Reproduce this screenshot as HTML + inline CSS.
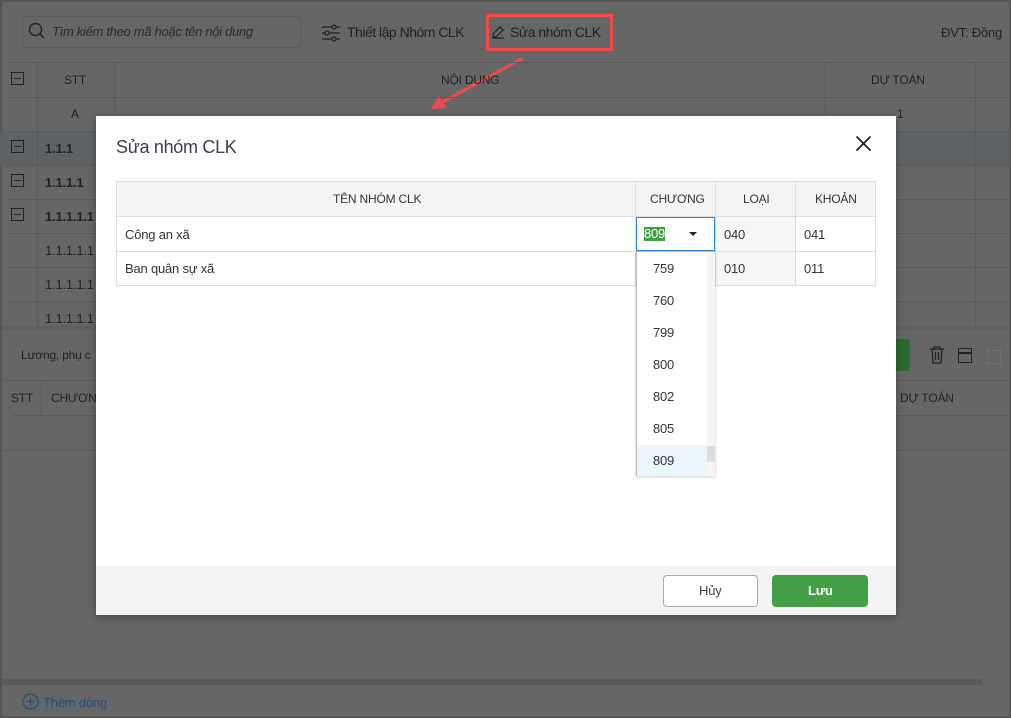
<!DOCTYPE html>
<html><head><meta charset="utf-8"><style>
*{box-sizing:border-box;margin:0;padding:0}
body{width:1011px;height:718px;overflow:hidden;background:#666;font-family:"Liberation Sans",sans-serif;font-size:13px;color:#222;position:relative;letter-spacing:-0.2px}
.a{position:absolute}
.t{position:absolute;white-space:nowrap}
.hl{position:absolute;height:1px;background:#5a5a5a}
.vl{position:absolute;width:1px;background:#5a5a5a}
.cb{position:absolute;width:13px;height:13px;border:1.5px solid #222;left:11px}
.cb:after{content:"";position:absolute;left:2px;right:2px;top:4.5px;height:1.5px;background:#222}
.m{font-size:13px;color:#333}
</style></head><body>
<div class="a" style="left:0;top:0;width:1011px;height:2px;background:#555"></div>
<div class="a" style="left:0;top:0;width:2px;height:718px;background:#555"></div>
<div class="a" style="right:0;top:0;width:2px;height:718px;background:#555"></div>
<div class="a" style="left:0;bottom:0;width:1011px;height:2px;background:#555"></div>
<!-- toolbar -->
<div class="a" style="left:22px;top:16px;width:279px;height:32px;border:1px solid #5a5a5a"></div>
<svg class="a" style="left:28px;top:22px" width="18" height="18"><circle cx="7.5" cy="7.5" r="6" fill="none" stroke="#222" stroke-width="1.4"/><line x1="12" y1="12" x2="16" y2="16" stroke="#222" stroke-width="1.5"/></svg>
<div class="t" style="left:52px;top:24px;font-style:italic;color:#2a2a2a;letter-spacing:-0.3px">Tìm kiếm theo mã hoặc tên nội dung</div>
<svg class="a" style="left:321px;top:23px" width="20" height="20"><g stroke="#222" stroke-width="1.3" fill="#666"><line x1="1" y1="4" x2="19" y2="4"/><line x1="1" y1="10" x2="19" y2="10"/><line x1="1" y1="16" x2="19" y2="16"/><circle cx="13" cy="4" r="2"/><circle cx="6" cy="10" r="2"/><circle cx="13" cy="16" r="2"/></g></svg>
<div class="t" style="left:347px;top:24px;font-size:14px;letter-spacing:-0.5px">Thiết lập Nhóm CLK</div>
<div class="a" style="left:486px;top:14px;width:127px;height:37px;border:3px solid #f04a4a"></div>
<svg class="a" style="left:491px;top:25px" width="14" height="14"><path d="M2 12 L2 9 L9 2 L12 5 L5 12 Z M1 13 H13" fill="none" stroke="#222" stroke-width="1.2"/></svg>
<div class="t" style="left:510px;top:24px;font-size:14px;letter-spacing:-0.5px">Sửa nhóm CLK</div>
<div class="t" style="left:941px;top:25px">ĐVT: Đồng</div>
<svg class="a" style="left:425px;top:52px" width="105" height="62"><line x1="98" y1="6" x2="14" y2="52" stroke="#f04a4a" stroke-width="3"/><polygon points="6,57 14,44 22,56" fill="#f04a4a"/></svg>
<!-- top table -->
<div class="hl" style="left:8px;top:62px;width:1001px"></div>
<div class="hl" style="left:8px;top:97px;width:1001px"></div>
<div class="hl" style="left:8px;top:131px;width:1001px"></div>
<div class="a" style="left:0;top:132px;width:1009px;height:33px;background:#5f6265"></div>
<div class="hl" style="left:8px;top:165px;width:1001px"></div>
<div class="hl" style="left:8px;top:199px;width:1001px"></div>
<div class="hl" style="left:8px;top:233px;width:1001px"></div>
<div class="hl" style="left:8px;top:267px;width:1001px"></div>
<div class="hl" style="left:8px;top:301px;width:1001px"></div>
<div class="vl" style="left:37px;top:62px;height:264px"></div>
<div class="vl" style="left:114px;top:62px;height:264px"></div>
<div class="vl" style="left:825px;top:62px;height:54px"></div>
<div class="vl" style="left:975px;top:62px;height:264px"></div>
<div class="cb" style="top:72px"></div>
<div class="t m" style="left:64px;top:73px;font-size:12px;color:#222">STT</div>
<div class="t m" style="left:441px;top:73px;font-size:12px;color:#222">NỘI DUNG</div>
<div class="t m" style="left:871px;top:73px;font-size:12px;color:#222">DỰ TOÁN</div>
<div class="t m" style="left:71px;top:107px;font-size:12px;color:#222">A</div>
<div class="t m" style="left:897px;top:107px;font-size:12px;color:#222">1</div>
<div class="cb" style="top:140px"></div><div class="t" style="left:45px;top:141px;font-weight:bold;color:#222">1.1.1</div>
<div class="cb" style="top:174px"></div><div class="t" style="left:45px;top:175px;font-weight:bold;color:#222">1.1.1.1</div>
<div class="cb" style="top:208px"></div><div class="t" style="left:45px;top:209px;font-weight:bold;color:#222">1.1.1.1.1</div>
<div class="t" style="left:45px;top:243px">1.1.1.1.1</div>
<div class="t" style="left:45px;top:277px">1.1.1.1.1</div>
<div class="t" style="left:45px;top:311px">1.1.1.1.1</div>
<div class="a" style="left:2px;top:326px;width:1007px;height:4px;background:#5e5e5e"></div>
<!-- lower -->
<div class="t" style="left:21px;top:348px;font-size:12px">Lương, phụ c</div>
<div class="a" style="left:860px;top:339px;width:50px;height:32px;background:#2d6a2f;border-radius:3px"></div>
<svg class="a" style="left:929px;top:346px" width="16" height="18"><g fill="none" stroke="#222" stroke-width="1.3"><path d="M1 3 H15 M5 3 V1 H11 V3 M3 3 L4 17 H12 L13 3 M6.5 6 V14 M9.5 6 V14"/></g></svg>
<div class="a" style="left:958px;top:348px;width:14px;height:15px;border:1.5px solid #222"></div>
<div class="a" style="left:958px;top:352px;width:14px;height:1.5px;background:#222"></div>
<div class="a" style="left:987px;top:350px;width:14px;height:14px;border:1px dashed #777"></div>
<div class="hl" style="left:2px;top:380px;width:1007px"></div>
<div class="hl" style="left:12px;top:415px;width:997px"></div>
<div class="hl" style="left:2px;top:450px;width:1007px"></div>
<div class="vl" style="left:41px;top:380px;height:35px"></div>
<div class="t m" style="left:11px;top:391px;font-size:12px;color:#222">STT</div>
<div class="t m" style="left:51px;top:391px;font-size:12px;color:#222">CHƯƠNG</div>
<div class="t m" style="left:900px;top:391px;font-size:12px;color:#222">DỰ TOÁN</div>
<div class="a" style="left:2px;top:679px;width:980px;height:6px;background:#5b5b5b"></div>
<svg class="a" style="left:22px;top:693px" width="17" height="17"><circle cx="8.5" cy="8.5" r="7.5" fill="none" stroke="#2b4c72" stroke-width="1.2"/><path d="M8.5 4.5 V12.5 M4.5 8.5 H12.5" stroke="#2b4c72" stroke-width="1.2"/></svg>
<div class="t" style="left:43px;top:695px;color:#2b4c72">Thêm dòng</div>
<!-- modal -->
<div class="a" style="left:96px;top:116px;width:800px;height:499px;background:#fff;box-shadow:0 2px 8px rgba(0,0,0,.3)">
<div class="t" style="left:20px;top:21px;font-size:18px;color:#3a4150;letter-spacing:-0.3px">Sửa nhóm CLK</div>
<svg class="a" style="left:759px;top:19px" width="17" height="17"><path d="M1.5 1.5 L15.5 15.5 M15.5 1.5 L1.5 15.5" stroke="#222" stroke-width="1.8"/></svg>
<div class="a" style="left:20px;top:65px;width:760px;height:105px;border:1px solid #ddd"></div>
<div class="a" style="left:21px;top:66px;width:758px;height:34px;background:#f4f4f4"></div>
<div class="a" style="left:619px;top:100px;width:80px;height:69px;background:#f6f6f6"></div>
<div class="a" style="left:20px;top:100px;width:760px;height:1px;background:#ddd"></div>
<div class="a" style="left:20px;top:135px;width:760px;height:1px;background:#ddd"></div>
<div class="a" style="left:539px;top:65px;width:1px;height:105px;background:#ddd"></div>
<div class="a" style="left:619px;top:65px;width:1px;height:105px;background:#ddd"></div>
<div class="a" style="left:699px;top:65px;width:1px;height:105px;background:#ddd"></div>
<div class="t" style="left:237px;top:76px;font-size:12px;color:#333">TÊN NHÓM CLK</div>
<div class="t" style="left:554px;top:76px;font-size:12px;color:#333">CHƯƠNG</div>
<div class="t" style="left:647px;top:76px;font-size:12px;color:#333">LOẠI</div>
<div class="t" style="left:719px;top:76px;font-size:12px;color:#333">KHOẢN</div>
<div class="t" style="left:29px;top:111px;color:#333">Công an xã</div>
<div class="t" style="left:29px;top:145px;color:#333">Ban quân sự xã</div>
<div class="t" style="left:628px;top:111px;color:#333">040</div>
<div class="t" style="left:708px;top:111px;color:#333">041</div>
<div class="t" style="left:628px;top:145px;color:#333">010</div>
<div class="t" style="left:708px;top:145px;color:#333">011</div>
<div class="a" style="left:540px;top:101px;width:79px;height:34px;background:#fff;border:1px solid #2a8ae0"></div>
<div class="t" style="left:548px;top:111px;background:#43a047;color:#fff;line-height:14px">809</div>
<div class="a" style="left:593px;top:116px;width:0;height:0;border-left:4px solid transparent;border-right:4px solid transparent;border-top:4px solid #222"></div>
<div class="a" style="left:0;top:450px;width:800px;height:49px;background:#f3f3f3"></div>
<div class="a" style="left:567px;top:459px;width:95px;height:32px;border:1px solid #aaa;border-radius:4px;background:#fff"></div>
<div class="t" style="left:603px;top:467px;color:#444">Hủy</div>
<div class="a" style="left:676px;top:459px;width:96px;height:32px;border-radius:4px;background:#43a047"></div>
<div class="t" style="left:712px;top:467px;color:#fff;font-weight:bold">Lưu</div>
<!-- dropdown -->
<div class="a" style="left:540px;top:135px;width:79px;height:225px;background:#fff;border:1px solid #bbb;box-shadow:0 1px 3px rgba(0,0,0,.2)">
<div class="a" style="left:70px;top:0;width:8px;height:224px;background:#f5f5f5"></div>
<div class="a" style="left:70px;top:194px;width:8px;height:16px;background:#ddd"></div>
<div class="a" style="left:0;top:193px;width:70px;height:31px;background:#eaf5fc"></div>
<div class="t" style="left:16px;top:9px;color:#333">759</div>
<div class="t" style="left:16px;top:41px;color:#333">760</div>
<div class="t" style="left:16px;top:73px;color:#333">799</div>
<div class="t" style="left:16px;top:105px;color:#333">800</div>
<div class="t" style="left:16px;top:137px;color:#333">802</div>
<div class="t" style="left:16px;top:169px;color:#333">805</div>
<div class="t" style="left:16px;top:201px;color:#333">809</div>
</div>
</div>
</body></html>
